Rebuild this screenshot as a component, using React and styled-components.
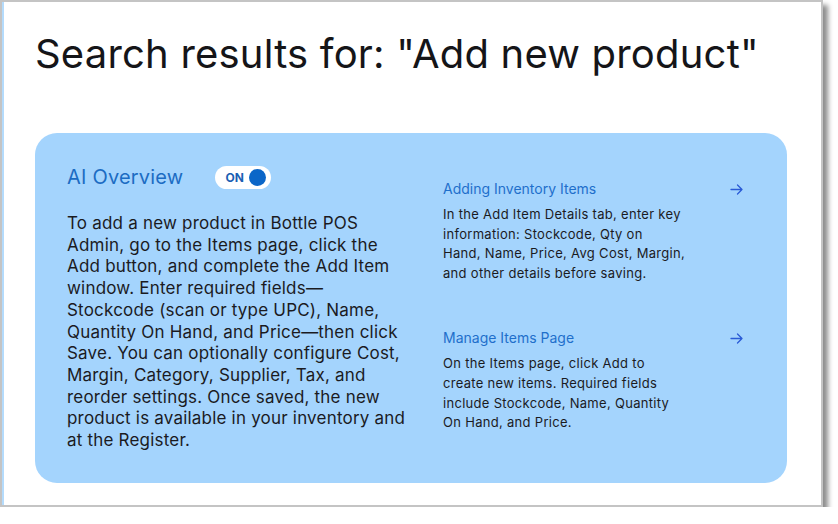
import React from "react";
import styled, { createGlobalStyle } from "styled-components";

const GlobalStyle = createGlobalStyle`
  html, body {
    margin: 0;
    padding: 0;
    background: #ffffff;
  }
  body {
    font-family: Inter, "Noto Sans", sans-serif;
    color: #1b1b1f;
  }
`;

const Frame = styled.div`
  box-sizing: border-box;
  width: 823px;
  height: 507px;
  border: 2px solid #c4c4c4;
  background: #ffffff;
  box-shadow: inset 2px 0 0 #b4dbfc, 5px 5px 5px rgba(0, 0, 0, 0.45);
  padding: 28px 0 0 33px;
`;

const Heading = styled.h1`
  margin: 0;
  font-size: 40px;
  line-height: 48px;
  font-weight: 400;
  color: #151518;
  letter-spacing: 0.2px;
`;

const Card = styled.section`
  box-sizing: border-box;
  margin-top: 55px;
  width: 752px;
  height: 350px;
  border-radius: 22px;
  background: #a4d4fd;
  padding: 32px 44px 0 32px;
  display: grid;
  grid-template-columns: 336px 300px;
  column-gap: 40px;
`;

const Overview = styled.div`
  display: flex;
  flex-direction: column;
`;

const OverviewHeader = styled.div`
  display: flex;
  align-items: center;
  gap: 32px;
  height: 24px;
`;

const OverviewTitle = styled.h2`
  margin: 0;
  font-size: 20px;
  line-height: 24px;
  font-weight: 400;
  letter-spacing: 0.2px;
  color: #1c6cc3;
`;

const Toggle = styled.button`
  display: flex;
  align-items: center;
  justify-content: space-between;
  box-sizing: border-box;
  width: 56px;
  height: 23px;
  padding: 0 5px 0 10px;
  border: none;
  border-radius: 12px;
  background: #ffffff;
  font-family: inherit;
  font-size: 12px;
  font-weight: 700;
  color: #1b5fb3;
  cursor: pointer;
`;

const Knob = styled.span`
  width: 17px;
  height: 17px;
  border-radius: 50%;
  background: #0b66c8;
`;

const Summary = styled.p`
  margin: 24px 0 0;
  font-size: 17px;
  line-height: 21.7px;
  letter-spacing: 0.2px;
  color: #1b1b1f;
`;

// keeps the wrapping of the original copy
const Line = styled.span`
  display: block;
  white-space: nowrap;
`;

const Sources = styled.div`
  display: flex;
  flex-direction: column;
  gap: 45px;
  padding-top: 14px;
`;

const Source = styled.article`
  display: flex;
  flex-direction: column;
  gap: 6px;
`;

const SourceHead = styled.a`
  display: flex;
  align-items: center;
  justify-content: space-between;
  font-size: 14px;
  line-height: 20px;
  color: #1f6fcb;
  text-decoration: none;
`;

const SourceText = styled.p`
  margin: 0;
  font-size: 13px;
  line-height: 19.6px;
  letter-spacing: 0.3px;
  color: #1b1b1f;
`;

const Arrow = () => (
  <svg width="13" height="11" viewBox="0 0 13 11" fill="none" stroke="#2a5bd6" strokeWidth="1.3" strokeLinecap="round" strokeLinejoin="round">
    <path d="M1 5.5h11M7.5 1l4.5 4.5L7.5 10" />
  </svg>
);

const summary = [
  "To add a new product in Bottle POS",
  "Admin, go to the Items page, click the",
  "Add button, and complete the Add Item",
  "window. Enter required fields—",
  "Stockcode (scan or type UPC), Name,",
  "Quantity On Hand, and Price—then click",
  "Save. You can optionally configure Cost,",
  "Margin, Category, Supplier, Tax, and",
  "reorder settings. Once saved, the new",
  "product is available in your inventory and",
  "at the Register.",
];

const sources = [
  {
    title: "Adding Inventory Items",
    lines: [
      "In the Add Item Details tab, enter key",
      "information: Stockcode, Qty on",
      "Hand, Name, Price, Avg Cost, Margin,",
      "and other details before saving.",
    ],
  },
  {
    title: "Manage Items Page",
    lines: [
      "On the Items page, click Add to",
      "create new items. Required fields",
      "include Stockcode, Name, Quantity",
      "On Hand, and Price.",
    ],
  },
];

export default function App() {
  return (
    <>
      <GlobalStyle />
      <Frame>
        <Heading>Search results for: "Add new product"</Heading>
        <Card>
          <Overview>
            <OverviewHeader>
              <OverviewTitle>AI Overview</OverviewTitle>
              <Toggle type="button">
                ON
                <Knob />
              </Toggle>
            </OverviewHeader>
            <Summary>
              {summary.map((line, i) => (
                <Line key={i}>{line}</Line>
              ))}
            </Summary>
          </Overview>
          <Sources>
            {sources.map((s) => (
              <Source key={s.title}>
                <SourceHead href="#">
                  {s.title}
                  <Arrow />
                </SourceHead>
                <SourceText>
                  {s.lines.map((line, i) => (
                    <Line key={i}>{line}</Line>
                  ))}
                </SourceText>
              </Source>
            ))}
          </Sources>
        </Card>
      </Frame>
    </>
  );
}
